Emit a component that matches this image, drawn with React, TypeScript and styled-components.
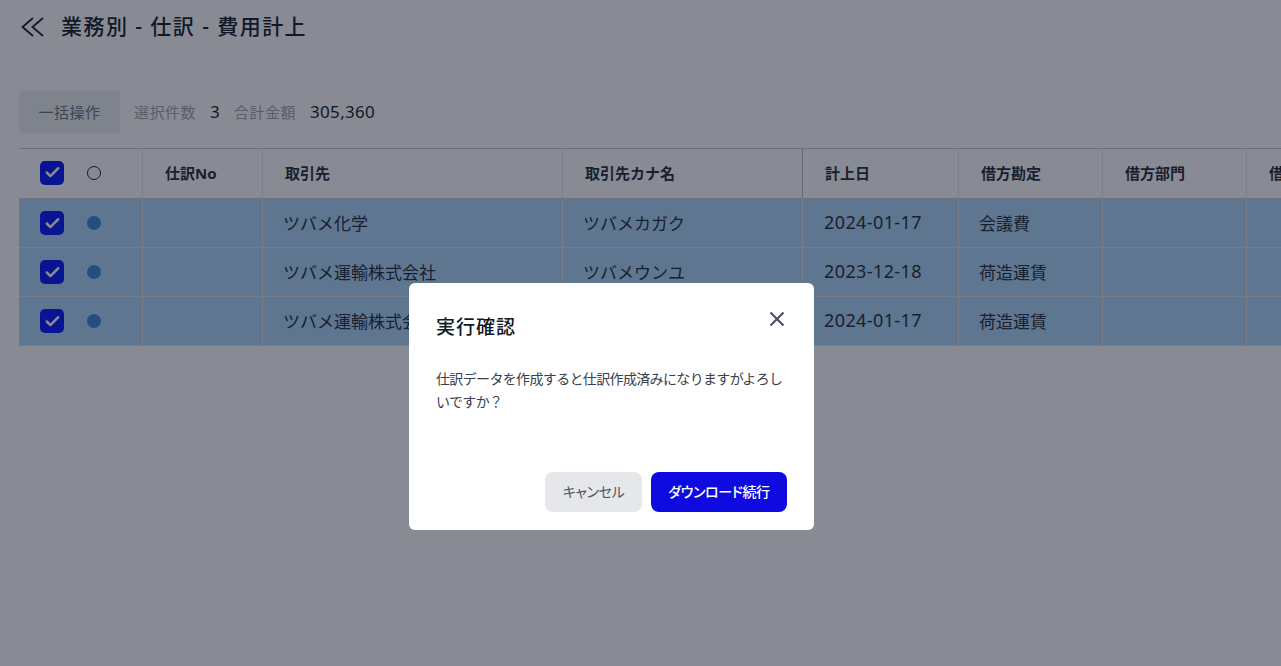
import React from "react";
import styled, { createGlobalStyle } from "styled-components";
import { Check } from "lucide-react";

const COLUMNS = "124px 120px 300px 240px 156px 144px 144px 200px";

const GlobalStyle = createGlobalStyle`
  html, body {
    margin: 0;
    height: 100%;
    background: #fff;
    overflow: hidden;
    font-family: "Noto Sans", "Noto Sans CJK JP", sans-serif;
    color: #111827;
  }
`;

const Page = styled.div`
  width: 1281px;
  height: 666px;
  padding-left: 19px;
  box-sizing: border-box;
  overflow: hidden;
`;

const Header = styled.header`
  display: flex;
  align-items: center;
  gap: 16px;
  height: 51px;
  padding-left: 2px;
`;

const Title = styled.h1`
  margin: 0;
  font-size: 21px;
  font-weight: 500;
  letter-spacing: 1.45px;
  line-height: 28px;
`;

const Toolbar = styled.div`
  display: flex;
  align-items: center;
  height: 42px;
  margin-top: 40px;
`;

const BulkButton = styled.button`
  width: 101px;
  height: 42px;
  padding: 0 0 2px;
  border: none;
  border-radius: 4px;
  background: #eceef1;
  color: #6b7280;
  font: inherit;
  font-size: 15px;
  letter-spacing: 0.5px;
`;

const Label = styled.span<{ $left: number }>`
  margin: 0 0 2px ${(p) => p.$left}px;
  color: #9ca3af;
  font-size: 15px;
  letter-spacing: 0.5px;
`;

const Value = styled.span`
  margin: 0 0 2px 14px;
  font-size: 17px;
  letter-spacing: 0.3px;
`;

const Table = styled.div`
  width: 1428px;
  margin-top: 15px;
  border-top: 1px solid #c6cad2;
`;

const Row = styled.div<{ $selected?: boolean }>`
  display: grid;
  grid-template-columns: ${COLUMNS};
  height: ${(p) => (p.$selected ? 49 : 50)}px;
  box-sizing: border-box;
  background: ${(p) => (p.$selected ? "#add4f9" : "transparent")};
  border-bottom: 1px solid ${(p) => (p.$selected ? "#dde2e9" : "#c6cad2")};
`;

const Cell = styled.div<{ $strong?: boolean }>`
  display: flex;
  align-items: center;
  padding: 0 0 1px 20px;
  box-sizing: border-box;
  border-right: 1px solid ${(p) => (p.$strong ? "#b3b8c2" : "#e5e7eb")};
  white-space: nowrap;
  overflow: hidden;
  font-size: 17px;
  color: #1f2937;
`;

const HeadCell = styled(Cell)`
  padding: 0 0 2px 22px;
  font-size: 15px;
  font-weight: 700;
`;

const DateCell = styled(Cell)`
  padding: 0 0 3px 21px;
  font-size: 18px;
  letter-spacing: 0.4px;
`;

const SelectCell = styled(Cell)<{ $head?: boolean }>`
  gap: 23px;
  padding: 0 0 ${(p) => (p.$head ? 2 : 0)}px 21px;
`;

const CheckBox = styled.span`
  display: flex;
  align-items: center;
  justify-content: center;
  flex: none;
  width: 24px;
  height: 24px;
  border-radius: 5px;
  background: #0010ff;
  color: #fff;
`;

const StatusMark = styled.span<{ $filled?: boolean }>`
  flex: none;
  width: 14px;
  height: 14px;
  box-sizing: border-box;
  border-radius: 50%;
  border: ${(p) => (p.$filled ? "none" : "1px solid #111827")};
  background: ${(p) => (p.$filled ? "#3a82dc" : "transparent")};
`;

const Overlay = styled.div`
  position: fixed;
  inset: 0;
  background: rgba(17, 24, 39, 0.5);
`;

const Modal = styled.div`
  position: absolute;
  left: 409px;
  top: 283px;
  display: flex;
  flex-direction: column;
  width: 405px;
  height: 247px;
  padding: 28px 27px 18px;
  box-sizing: border-box;
  border-radius: 6px;
  background: #fff;
`;

const ModalHead = styled.div`
  display: flex;
  align-items: flex-start;
  justify-content: space-between;
`;

const ModalTitle = styled.h2`
  margin: 0;
  font-size: 19px;
  font-weight: 500;
  line-height: 32px;
  letter-spacing: 1px;
  color: #111827;
`;

const CloseButton = styled.button`
  display: flex;
  width: 16px;
  height: 16px;
  margin: 0 2px 0 0;
  padding: 0;
  border: none;
  background: none;
  color: #4b5563;
`;

const ModalText = styled.p`
  margin: 24px 0 0;
  font-size: 14px;
  line-height: 23px;
  letter-spacing: -0.65px;
  color: #374151;
`;

const ModalFoot = styled.div`
  display: flex;
  justify-content: flex-end;
  gap: 9px;
  margin-top: auto;
`;

const ModalButton = styled.button<{ $primary?: boolean }>`
  width: ${(p) => (p.$primary ? 136 : 97)}px;
  height: 40px;
  padding: 0 0 3px;
  border: none;
  border-radius: 8px;
  background: ${(p) => (p.$primary ? "#0f0ae0" : "#e5e7eb")};
  color: ${(p) => (p.$primary ? "#fff" : "#4b5563")};
  font: inherit;
  font-size: 14px;
  font-weight: ${(p) => (p.$primary ? 500 : 400)};
  font-feature-settings: "palt";
  letter-spacing: -0.35px;
`;

const headers = ["取引先", "取引先カナ名", "計上日", "借方勘定", "借方部門", "借"];

const rows = [
  { partner: "ツバメ化学", kana: "ツバメカガク", date: "2024-01-17", account: "会議費" },
  { partner: "ツバメ運輸株式会社", kana: "ツバメウンユ", date: "2023-12-18", account: "荷造運賃" },
  { partner: "ツバメ運輸株式会社", kana: "ツバメウンユ", date: "2024-01-17", account: "荷造運賃" },
];

function SelectedBox() {
  return (
    <CheckBox>
      <Check size={17} strokeWidth={3.5} />
    </CheckBox>
  );
}

export default function App() {
  return (
    <>
      <GlobalStyle />
      <Page>
        <Header>
          <svg width="24" height="24" viewBox="0 0 24 24" fill="none" stroke="#111827" strokeWidth="1.8">
            <path d="M12 5 1.500 14 12 23M22 5 11.500 14 22 23" transform="translate(0 -1)" />
          </svg>
          <Title>業務別 - 仕訳 - 費用計上</Title>
        </Header>
        <Toolbar>
          <BulkButton>一括操作</BulkButton>
          <Label $left={14}>選択件数</Label>
          <Value>3</Value>
          <Label $left={14}>合計金額</Label>
          <Value>305,360</Value>
        </Toolbar>
        <Table>
          <Row>
            <SelectCell $head>
              <SelectedBox />
              <StatusMark />
            </SelectCell>
            <HeadCell>仕訳No</HeadCell>
            {headers.map((h, i) => (
              <HeadCell $strong={i === 1} key={h}>
                {h}
              </HeadCell>
            ))}
          </Row>
          {rows.map((r) => (
            <Row $selected key={r.date + r.account}>
              <SelectCell>
                <SelectedBox />
                <StatusMark $filled />
              </SelectCell>
              <Cell />
              <Cell>{r.partner}</Cell>
              <Cell>{r.kana}</Cell>
              <DateCell>{r.date}</DateCell>
              <Cell>{r.account}</Cell>
              <Cell />
              <Cell />
            </Row>
          ))}
        </Table>
      </Page>
      <Overlay>
        <Modal>
          <ModalHead>
            <ModalTitle>実行確認</ModalTitle>
            <CloseButton aria-label="閉じる">
              <svg width="16" height="16" viewBox="0 0 16 16" fill="none" stroke="currentColor" strokeWidth="2.2">
                <path d="M1.500 1.500 14.500 14.500M14.500 1.500 1.500 14.500" />
              </svg>
            </CloseButton>
          </ModalHead>
          <ModalText>仕訳データを作成すると仕訳作成済みになりますがよろしいですか？</ModalText>
          <ModalFoot>
            <ModalButton>キャンセル</ModalButton>
            <ModalButton $primary>ダウンロード続行</ModalButton>
          </ModalFoot>
        </Modal>
      </Overlay>
    </>
  );
}
